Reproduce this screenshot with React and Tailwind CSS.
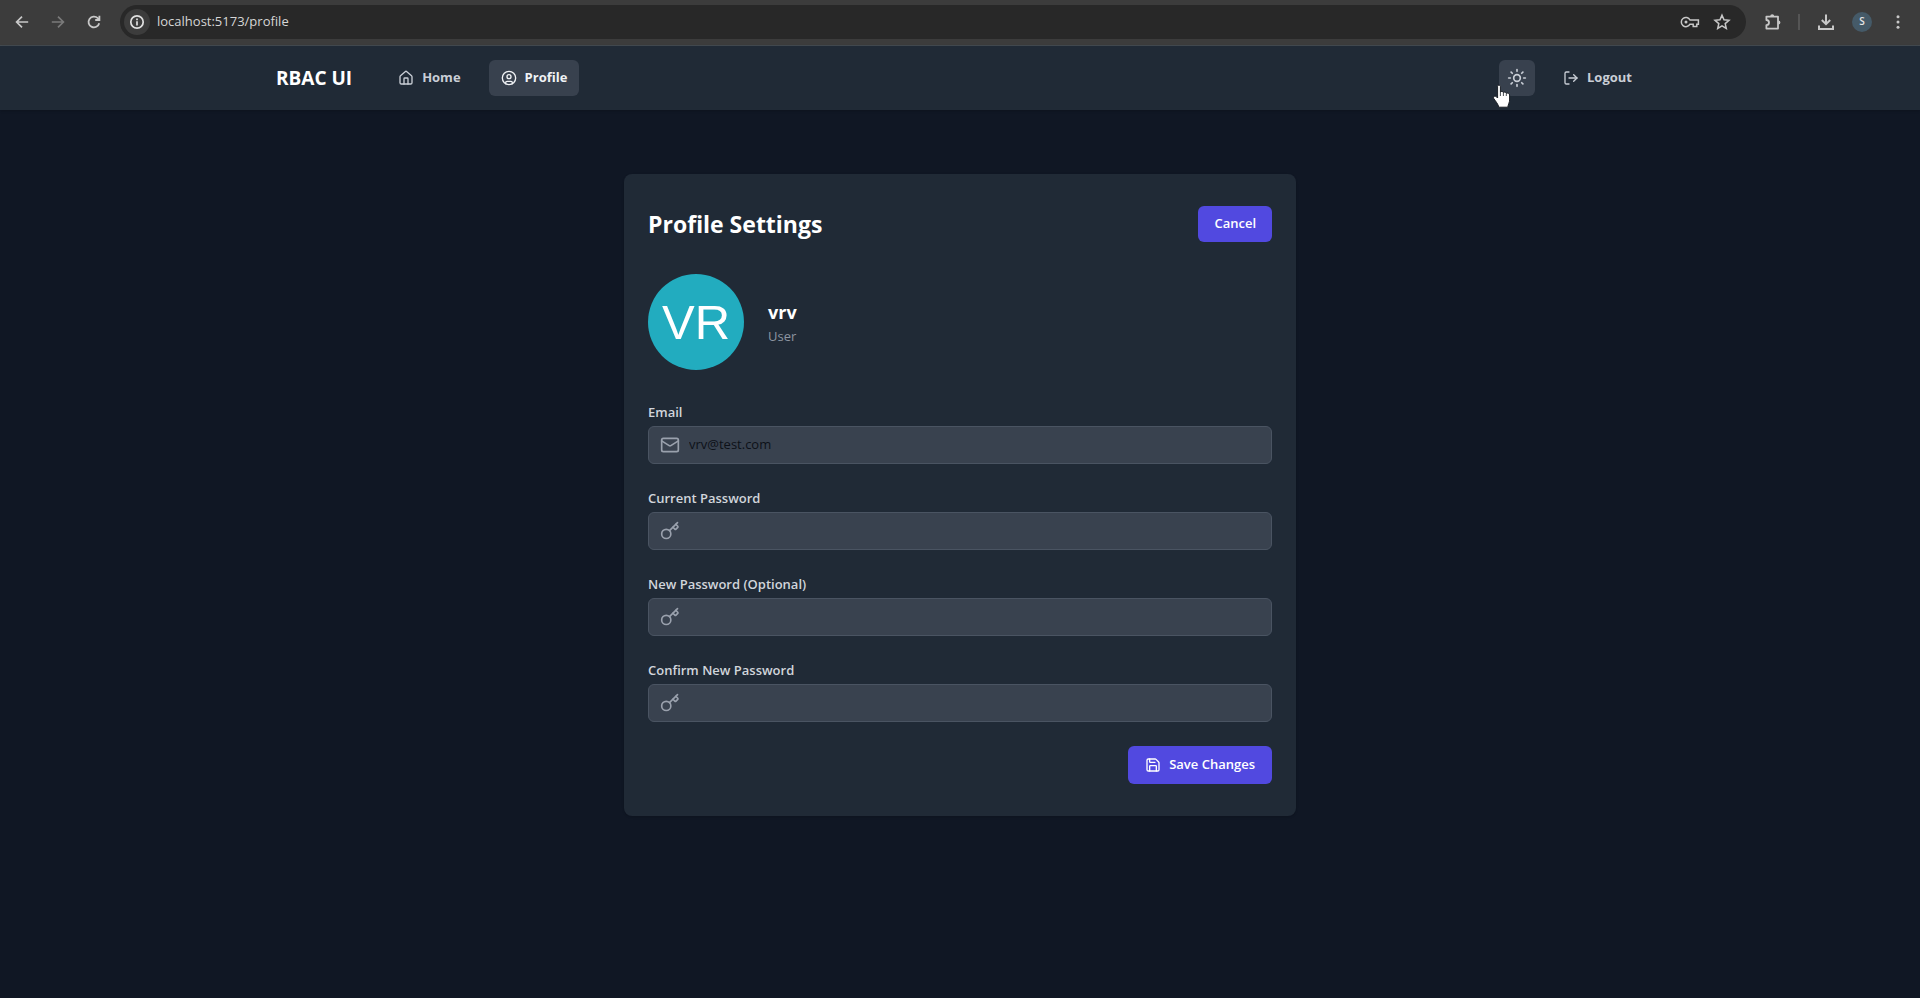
import { CircleUser, House, Key, LogOut, Mail, Save, Sun } from "lucide-react";

function BrowserBar() {
  return (
    <div className="flex h-[46px] items-center border-b border-[#434a50] bg-[#3c3c3c] pr-3 pb-0.5 text-[#c8c8c8]">
      <button aria-label="Back" className="ml-3 flex size-5 items-center justify-center">
        <svg viewBox="0 0 16 16" className="size-4" fill="none" stroke="currentColor" strokeWidth="1.7">
          <path d="M14.2 8H3M8 2.6 2.6 8 8 13.4" />
        </svg>
      </button>
      <button aria-label="Forward" className="ml-4 flex size-5 items-center justify-center text-[#7a7a7a]">
        <svg viewBox="0 0 16 16" className="size-4" fill="none" stroke="currentColor" strokeWidth="1.7">
          <path d="M1.8 8H13M8 2.6 13.4 8 8 13.4" />
        </svg>
      </button>
      <button aria-label="Reload" className="ml-4 flex size-5 items-center justify-center">
        <svg viewBox="0 0 16 16" className="size-4" fill="none" stroke="currentColor" strokeWidth="1.8">
          <path d="M13.2 9.2A5.4 5.4 0 1 1 11.8 4.2L13 5.4" />
          <path d="M13.4 1.8V6H9.2" />
        </svg>
      </button>
      <div className="ml-4 flex h-[34px] flex-1 items-center rounded-full bg-[#282828] pr-3.5 pl-1">
        <button aria-label="View site information" className="flex size-[26px] items-center justify-center rounded-full bg-[#3c3c3c] text-[#e0e0e0]">
          <svg viewBox="0 0 16 16" className="size-4" fill="none" stroke="currentColor" strokeWidth="1.7">
            <circle cx="8" cy="8" r="6.2" />
            <path d="M8 7.2V11.4M8 4.6V6.2" />
          </svg>
        </button>
        <input
          aria-label="Address"
          defaultValue="localhost:5173/profile"
          className="ml-[7px] min-w-0 flex-1 bg-transparent text-[13px] text-[#d6d6d6] outline-none"
        />
        <button aria-label="Passwords" className="flex size-5 items-center justify-center">
          <svg viewBox="0 0 20 14" className="h-3.5 w-5" fill="none" stroke="currentColor" strokeWidth="1.5">
            <path d="M10 5A4.6 4.6 0 1 0 10 9.2H13.2V11.4H16.8V9.2H18.4V5Z" />
            <circle cx="6" cy="7" r="1.5" fill="currentColor" stroke="none" />
          </svg>
        </button>
        <button aria-label="Bookmark this tab" className="ml-3 flex size-5 items-center justify-center">
          <svg viewBox="0 0 18 18" className="size-[18px]" fill="none" stroke="currentColor" strokeWidth="1.5">
            <path d="M9 2.2 11 6.8 16 7.3 12.2 10.6 13.3 15.5 9 12.9 4.7 15.5 5.8 10.6 2 7.3 7 6.8Z" />
          </svg>
        </button>
      </div>
      <button aria-label="Extensions" className="ml-4 flex size-5 items-center justify-center">
        <svg viewBox="0 0 20 20" className="size-5" fill="none" stroke="currentColor" strokeWidth="1.8">
          <path d="M4.4 4.6H16V16.6H4.4V13.2A2.6 2.6 0 0 0 4.4 8Z" strokeLinejoin="round" />
          <path d="M8.2 4.2A2 2 0 0 1 12.2 4.2ZM16.4 8.6A2 2 0 0 1 16.4 12.6Z" fill="currentColor" stroke="none" />
        </svg>
      </button>
      <span className="ml-4 h-4 w-0.5 bg-[#555555]" />
      <button aria-label="Downloads" className="ml-4 flex size-5 items-center justify-center">
        <svg viewBox="0 0 18 18" className="size-[18px]" fill="none" stroke="currentColor" strokeWidth="2">
          <path d="M9 1.5V11M4.8 7 9 11.2 13.2 7M2 12.5V16H16V12.5" />
        </svg>
      </button>
      <button aria-label="Account" className="ml-4 flex size-5 items-center justify-center rounded-full bg-[#455a68] text-[10px] font-semibold text-[#e6e6e6]">
        S
      </button>
      <button aria-label="Menu" className="ml-4 flex size-5 items-center justify-center">
        <svg viewBox="0 0 16 16" className="size-4" fill="currentColor">
          <circle cx="8" cy="2.8" r="1.5" />
          <circle cx="8" cy="8" r="1.5" />
          <circle cx="8" cy="13.2" r="1.5" />
        </svg>
      </button>
    </div>
  );
}

function Navbar() {
  return (
    <nav className="bg-[#202a36] shadow-sm">
      <div className="mx-auto flex h-16 max-w-[1400px] items-center justify-between px-4">
        <div className="flex items-center">
          <a href="#" className="mr-[34px] text-[19px] font-bold text-white">RBAC UI</a>
          <div className="flex gap-4 text-[13px] font-bold">
            <a href="#home" className="flex h-9 items-center gap-2 rounded-md px-3 text-[#c9ced6]">
              <House className="size-4" />
              Home
            </a>
            <a href="#profile" className="flex h-9 items-center gap-2 rounded-md bg-[#38414e] px-3 text-[#f0f2f5]">
              <CircleUser className="size-4" />
              Profile
            </a>
          </div>
        </div>
        <div className="flex gap-4">
          <button aria-label="Toggle theme" className="relative flex size-9 items-center justify-center rounded-md bg-[#38414e] text-[#c9ced6]">
            <Sun className="size-5" />
            <svg viewBox="0 0 20 26" className="absolute top-6 -left-[7px] h-[26px] w-5" aria-hidden="true">
              <path
                d="M5.6 2.2C5.6.7 8.4.7 8.4 2.2V8C9 7 11.2 7.2 11.4 8.6 12.2 7.7 14 8 14.3 9.4 15.2 8.7 17.6 9.2 17.6 11V16C17.6 18.4 16.2 20.2 15.8 23.2H6.8C6.2 20.2 3.6 17.2 1.8 14.6.8 12.6 3 11.4 4.4 12.8L5.6 14Z"
                fill="#ffffff"
                stroke="#1b1f26"
                strokeWidth="1"
              />
              <path d="M8.4 8V12M11.4 8.8V12M14.3 9.6V12" stroke="#1b1f26" strokeWidth="0.8" />
            </svg>
          </button>
          <button className="flex h-9 items-center gap-2 rounded-md px-3 text-[13px] font-bold text-[#c9ced6]">
            <LogOut className="size-4" />
            Logout
          </button>
        </div>
      </div>
    </nav>
  );
}

function Field({ id, label, icon: Icon, ...props }) {
  return (
    <div>
      <label htmlFor={id} className="block text-[13px] leading-5 font-semibold text-[#d1d5db]">{label}</label>
      <div className="mt-1 flex h-[38px] items-center gap-[9px] rounded-md border border-[#4a5462] bg-[#39424f] px-[11px]">
        <Icon className="size-5 shrink-0 text-[#9aa1ad]" />
        <input id={id} className="min-w-0 flex-1 bg-transparent text-[13px] text-[#0d1118] outline-none" {...props} />
      </div>
    </div>
  );
}

function ProfileCard() {
  return (
    <section className="mx-auto max-w-2xl rounded-lg bg-[#202a36] px-6 py-8 shadow">
      <div className="flex items-center justify-between">
        <h1 className="text-[23px] font-bold text-white">Profile Settings</h1>
        <button className="h-9 rounded-md bg-[#5149e0] px-4 text-[13px] font-semibold text-white">Cancel</button>
      </div>
      <div className="mt-8 flex items-center gap-6">
        <div className="flex size-24 items-center justify-center rounded-full bg-[#22acbf] font-['Liberation_Sans',sans-serif] text-[49px] leading-none text-white">
          VR
        </div>
        <div>
          <h2 className="text-lg leading-7 font-bold text-white">vrv</h2>
          <p className="text-[13px] leading-5 text-[#8d95a1]">User</p>
        </div>
      </div>
      <form className="mt-8 flex flex-col gap-6" onSubmit={(event) => event.preventDefault()}>
        <Field id="email" label="Email" icon={Mail} type="email" defaultValue="vrv@test.com" />
        <Field id="current-password" label="Current Password" icon={Key} type="password" />
        <Field id="new-password" label="New Password (Optional)" icon={Key} type="password" />
        <Field id="confirm-password" label="Confirm New Password" icon={Key} type="password" />
        <button type="submit" className="flex h-[38px] items-center gap-2 self-end rounded-md border border-transparent bg-[#5149e0] px-4 text-[13px] font-semibold text-white">
          <Save className="size-4" />
          Save Changes
        </button>
      </form>
    </section>
  );
}

export default function App() {
  return (
    <div className="min-h-screen bg-[#101724] font-['Open_Sans',sans-serif]">
      <BrowserBar />
      <Navbar />
      <main className="px-4 py-16">
        <ProfileCard />
      </main>
    </div>
  );
}
